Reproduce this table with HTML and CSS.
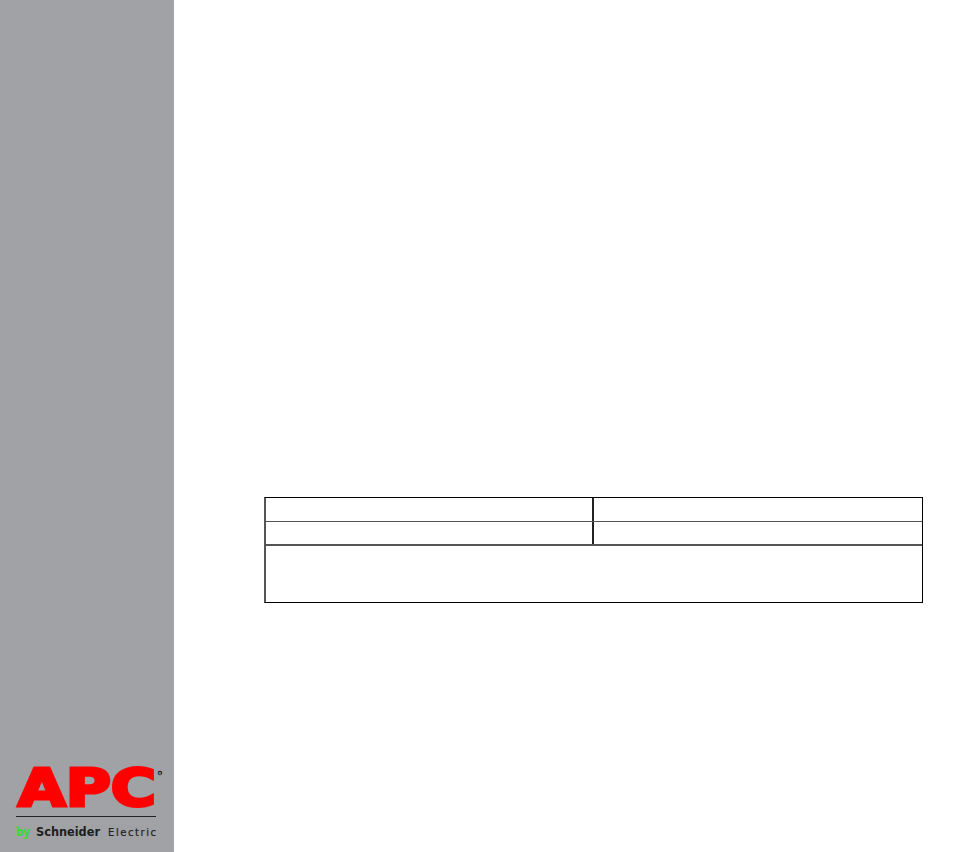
FILE: index.html
```html
<!DOCTYPE html>
<html lang="en">
<head>
<meta charset="utf-8">
<title>APC</title>
<link rel="stylesheet" href="styles.css">
</head>
<body>
<div class="page">
  <aside class="sidebar">
    <svg class="logo" width="174" height="100" viewBox="0 0 174 100" xmlns="http://www.w3.org/2000/svg">
      <text x="18" y="54" class="apc" textLength="138" lengthAdjust="spacingAndGlyphs">APC</text>
      <circle cx="160" cy="21" r="2.3" fill="#222"/>
      <text x="158.6" y="22.6" class="reg">R</text>
      <line x1="16" y1="64.5" x2="156" y2="64.5" stroke="#222" stroke-width="1"/>
      <text x="16" y="84" class="by" textLength="14" lengthAdjust="spacingAndGlyphs">by</text>
      <text x="36" y="84" class="schneider" textLength="64" lengthAdjust="spacingAndGlyphs">Schneider</text>
      <text x="108" y="84" class="electric" textLength="48" lengthAdjust="spacing">Electric</text>
    </svg>
  </aside>
  <main class="content">
    <div class="info-table">
      <div class="row row-first">
        <div class="cell cell-left"></div>
        <div class="cell"></div>
      </div>
      <div class="row row-second">
        <div class="cell cell-left"></div>
        <div class="cell"></div>
      </div>
      <div class="note"></div>
    </div>
  </main>
</div>
</body>
</html>
```
FILE: styles.css
```css
html, body {
  margin: 0;
  padding: 0;
  background: #ffffff;
  font-family: "Liberation Sans", Arial, sans-serif;
}

.page {
  display: flex;
  width: 954px;
  height: 852px;
}

.sidebar {
  width: 174px;
  flex: 0 0 174px;
  background: #a1a2a6;
  display: flex;
  flex-direction: column;
  justify-content: flex-end;
}

.logo {
  display: block;
}

.apc {
  font-family: "DejaVu Sans", "Liberation Sans", sans-serif;
  font-weight: 700;
  font-size: 52px;
  fill: #ff0000;
  stroke: #ff0000;
  stroke-width: 3.2;
  stroke-linejoin: miter;
}

.reg {
  font-family: "Liberation Sans", Arial, sans-serif;
  font-size: 4px;
  font-weight: 700;
  fill: #a1a2a6;
}

.by {
  font-family: "DejaVu Sans", sans-serif;
  font-weight: 700;
  font-size: 12px;
  fill: #33dd33;
}

.schneider {
  font-family: "DejaVu Sans", sans-serif;
  font-weight: 700;
  font-size: 12px;
  fill: #1e1e1e;
}

.electric {
  font-family: "DejaVu Sans", sans-serif;
  font-size: 10px;
  fill: #222;
  stroke: #222;
  stroke-width: 0.2;
}

.content {
  flex: 1;
  padding-top: 497px;
  padding-left: 90px;
}

.info-table {
  width: 659px;
  box-sizing: border-box;
  border-top: 1px solid #000;
  border-right: 1px solid #000;
  border-bottom: 1px solid #000;
  border-left: 2px solid #555;
}

.row {
  display: grid;
  grid-template-columns: 328px 1fr;
}

.row-first {
  height: 23px;
  border-bottom: 1px solid #555;
}

.row-second {
  height: 22px;
  border-bottom: 2px solid #555;
}

.cell-left {
  border-right: 2px solid #222;
}

.note {
  height: 56px;
}
```
